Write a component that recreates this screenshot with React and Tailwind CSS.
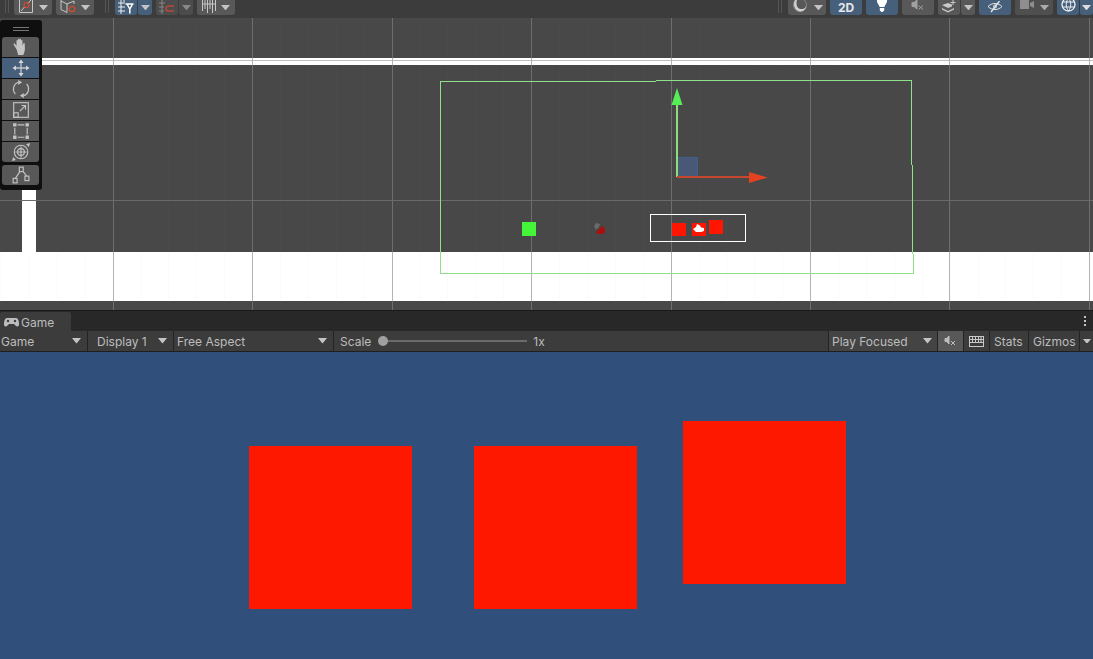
const FONT = { fontFamily: "Inter, 'Liberation Sans', sans-serif" };

function Caret({ color = "#c4c4c4", size = 9 }) {
  return (
    <svg width={size} height={size * 0.6} viewBox="0 0 10 6" className="shrink-0">
      <path d="M0 0h10L5 6z" fill={color} />
    </svg>
  );
}

// top toolbar button, cut off by the window edge
function TopBtn({ w, blue, children, className = "" }) {
  return (
    <div
      className={`h-[15px] flex items-center justify-center overflow-hidden rounded-b-[3px] ${blue ? "bg-[#46607c]" : "bg-[#585858]"} ${className}`}
      style={{ width: w }}
    >
      {children}
    </div>
  );
}

function TopBar() {
  return (
    <div className="h-[18px] bg-[#3c3c3c] relative flex items-start shrink-0 pl-[5px]">
      <div className="w-[4px] h-[13px] border-x border-[#555] mr-[5px]" />
      <TopBtn w={38} className="gap-[5px]">
        <svg width="16" height="15" viewBox="0 0 16 15" fill="none" stroke="#c8c8c8">
          <path d="M1.500 0v12.500h13V0" />
          <path d="M3 11l3.500-4M10 3.500L13 0" />
          <circle cx="8.500" cy="5" r="2.500" stroke="#d9482f" strokeWidth="1.200" />
        </svg>
        <Caret />
      </TopBtn>
      <TopBtn w={38} className="ml-[4px] gap-[5px]">
        <svg width="16" height="15" viewBox="0 0 16 15" fill="none" stroke="#c8c8c8">
          <path d="M1 0v9.500l6 3V4L1 1M7 4l7-3v3" />
          <circle cx="12" cy="9" r="2.700" stroke="#d9482f" strokeWidth="1.200" />
        </svg>
        <Caret />
      </TopBtn>
      <div className="w-[4px] h-[13px] border-x border-[#555] ml-[11px] mr-[6px]" />
      <TopBtn w={22} blue className="rounded-r-none">
        <svg width="16" height="15" viewBox="0 0 16 15" fill="none">
          <path d="M0 3h7M0 7h7M0 11h7M3 0v14M6 0v2" stroke="#eee" />
          <path d="M7.500 4h8M9 4l2.800 5 2.800-5M11.800 9v4.500" stroke="#fff" strokeWidth="1.500" />
        </svg>
      </TopBtn>
      <TopBtn w={14} blue className="ml-[1px] rounded-l-none"><Caret /></TopBtn>
      <TopBtn w={22} className="ml-[4px] rounded-r-none !bg-[#4c4c4c]">
        <svg width="16" height="15" viewBox="0 0 16 15" fill="none">
          <path d="M0 3h6M0 7h5M0 11h5M3 0v14" stroke="#858585" />
          <path d="M15 6H9.500a2.500 2.500 0 000 5H15" stroke="#b8493a" strokeWidth="1.700" />
        </svg>
      </TopBtn>
      <TopBtn w={14} className="ml-[1px] rounded-l-none !bg-[#4c4c4c]"><Caret color="#888" /></TopBtn>
      <TopBtn w={38} className="ml-[4px] gap-[5px]">
        <svg width="14" height="15" viewBox="0 0 14 15" fill="none" stroke="#c8c8c8">
          <path d="M.5 0v11M13.500 0v11M.5 4h13M3 0v9M5.500 0v13M8 0v9M10.500 0v13" />
        </svg>
        <Caret />
      </TopBtn>

      <div className="flex-1" />
      <div className="w-[4px] h-[13px] border-x border-[#555] mr-[6px]" />
      <TopBtn w={38} className="gap-[6px]">
        <svg width="16" height="15" viewBox="0 0 16 15" fill="none">
          <circle cx="8" cy="5" r="6.500" stroke="#8a8a8a" />
          <path d="M3 0C.5 4 2.500 11 8 11.500c3 0 5.500-2 6.500-5-2 2.500-5 3.200-7.500 2C4.500 7 4 3 5 0z" fill="#cfcfcf" />
        </svg>
        <Caret />
      </TopBtn>
      <TopBtn w={32} blue className="ml-[4px]">
        <span className="text-[12px] font-bold text-[#e8e8e8] leading-none">2D</span>
      </TopBtn>
      <TopBtn w={32} blue className="ml-[4px]">
        <svg width="12" height="15" viewBox="0 0 12 15">
          <path d="M1 0h10c.5 3-2 4.500-2.500 7h-5C3 4.500.5 3 1 0zM3.800 8h4.400v2.500L6.500 12h-1L3.800 10.500z" fill="#fff" />
        </svg>
      </TopBtn>
      <TopBtn w={32} className="ml-[4px]">
        <svg width="14" height="15" viewBox="0 0 14 15" fill="none" stroke="#a0a0a0">
          <path d="M1 2.500h2L6 0v9L3 6.500H1z" fill="#a0a0a0" />
          <path d="M7.500 5.500l4.500 4M12 5.500l-4.500 4" />
        </svg>
      </TopBtn>
      <TopBtn w={22} className="ml-[4px] rounded-r-none">
        <svg width="16" height="15" viewBox="0 0 16 15">
          <path d="M1 5l6-2 4 1.500v2L7 8zM1 8l6 3 6-3v1.500L7 12.500l-6-3z" fill="#c8c8c8" />
          <path d="M12 0v5M9.500 2.500h5" stroke="#c8c8c8" />
        </svg>
      </TopBtn>
      <TopBtn w={14} className="ml-[1px] rounded-l-none"><Caret /></TopBtn>
      <TopBtn w={32} blue className="ml-[4px]">
        <svg width="16" height="13" viewBox="0 0 16 13" fill="none" stroke="#e8e8e8">
          <path d="M1 5.500c4-4 10-4 14 0-4 4-10 4-14 0z" />
          <circle cx="8" cy="5.500" r="1.500" />
          <path d="M12.500 0L4 11" strokeWidth="1.300" />
        </svg>
      </TopBtn>
      <TopBtn w={38} className="ml-[4px] gap-[6px] !bg-[#4f4f4f]">
        <svg width="14" height="15" viewBox="0 0 14 15">
          <path d="M0 0h9v9H0zM10 3l4-2v7l-4-2z" fill="#8e8e8e" />
        </svg>
        <Caret color="#aaa" />
      </TopBtn>
      <TopBtn w={22} blue className="ml-[4px] rounded-r-none">
        <svg width="15" height="15" viewBox="0 0 15 15" fill="none" stroke="#f0f0f0">
          <circle cx="7.500" cy="4.500" r="6.500" strokeWidth="1.300" />
          <path d="M1.500 2h12M1.500 7h12M7.500-2c-3 4-3 9 0 13M7.500-2c3 4 3 9 0 13" />
        </svg>
      </TopBtn>
      <TopBtn w={13} blue className="ml-[1px] rounded-none"><Caret color="#ddd" /></TopBtn>
    </div>
  );
}

// the scene view drawing: world grid, bounds, gizmo and sprites
function SceneDrawing() {
  const major = [113, 252, 392, 531, 671, 810, 949, 1089];
  const minor = [];
  for (let x = 1; x < 1093; x += 27.9) minor.push(x);
  return (
    <svg width="1093" height="292" viewBox="0 18 1093 292" className="absolute inset-0" shapeRendering="crispEdges">
      <rect x="0" y="58" width="1093" height="7" fill="#ffffff" />
      <rect x="0" y="60" width="1093" height="1" fill="#c0c0c0" />
      <rect x="0" y="252" width="1093" height="49" fill="#ffffff" />
      <rect x="22" y="190" width="14" height="62" fill="#ffffff" />
      {minor.map((x) => (
        <g key={x}>
          <rect x={x} y="18" width="1" height="292" fill="#ffffff" opacity="0.015" />
          <rect x={x} y="252" width="1" height="49" fill="#000000" opacity="0.015" />
        </g>
      ))}
      {major.map((x) => (
        <g key={x}>
          <rect x={x} y="18" width="1" height="292" fill="#6e6e6e" />
          <rect x={x} y="58" width="1" height="7" fill="#b4b4b4" />
          <rect x={x} y="252" width="1" height="49" fill="#b4b4b4" />
        </g>
      ))}
      <rect x="0" y="200" width="1093" height="1" fill="#6a6a6a" />

      {/* camera bounds, slightly stepped */}
      <g fill="#8ee08a">
        <rect x="440" y="81" width="216" height="1" />
        <rect x="656" y="80" width="256" height="1" />
        <rect x="911" y="80" width="1" height="85" />
        <rect x="912" y="165" width="1" height="89" />
        <rect x="913" y="254" width="1" height="20" />
        <rect x="440" y="81" width="1" height="193" />
        <rect x="440" y="273" width="157" height="1" />
        <rect x="597" y="273" width="317" height="1" />
      </g>

      {/* move gizmo */}
      <rect x="677" y="157" width="20" height="20" fill="#4a5878" stroke="#3f5f90" />
      <rect x="676" y="104" width="2" height="73" fill="#8fdc7e" />
      <rect x="677" y="176" width="72" height="2" fill="#c8452f" />
      <g shapeRendering="auto">
        <path d="M677 88l5.500 17h-11z" fill="#55ee55" />
        <path d="M749 172l18.500 5.500-18.500 5.500z" fill="#e5431f" />
      </g>

      <rect x="522" y="222" width="14" height="14" fill="#44f53a" />
      <rect x="650.500" y="214.500" width="95" height="27" fill="none" stroke="#ffffff" />
      <rect x="672" y="223" width="14" height="13" fill="#ff1500" />
      <rect x="692" y="223" width="14" height="13" fill="#ff1500" />
      <rect x="709" y="220" width="14" height="14" fill="#ff1500" />
      <g shapeRendering="auto">
        <path d="M693 229l3-2 1-3 3 1.500 1 2 3 .5v3l-3 1h-5z" fill="#ffffff" />
        <path d="M594 226l2-3 4 1-1 3-3 3z" fill="#6a6a6a" />
        <path d="M596 232l6-6 3 2v4l-2 2h-6z" fill="#a81010" />
      </g>
    </svg>
  );
}

function ToolBtn({ active, children, className = "" }) {
  return (
    <div className={`w-[37px] h-[20px] flex items-center justify-center ${active ? "bg-[#46607c]" : "bg-[#585858]"} ${className}`}>
      <svg width="18" height="18" viewBox="0 0 16 16" fill="none" stroke="#c4c4c4" strokeWidth="1">
        {children}
      </svg>
    </div>
  );
}

function ToolPanel() {
  return (
    <div className="absolute left-0 top-[2px] w-[42px] h-[170px] bg-[#0f0f0f] rounded-[3px] flex flex-col items-start pl-[2px]">
      <div className="h-[17px] w-[16px] ml-[11px] flex flex-col justify-center gap-[2px]">
        <div className="h-px bg-[#777]" />
        <div className="h-px bg-[#777]" />
      </div>
      <div className="flex flex-col gap-px w-[37px]">
        <ToolBtn className="rounded-t-[3px]">
          <path d="M4 10L1.500 6c-.5-1 .8-1.500 1.300-.7L4 7V2.500c0-1 1.300-1 1.300 0V6.500V1.500c0-1 1.400-1 1.400 0V6.500V1.500c0-1 1.300-1 1.300 0V6.500V2.500c0-1 1.300-1 1.300 0V7l.7-2c.3-1 1.500-.8 1.300.2L11.500 10c-.5 3-1 4-1.500 5H5.500C5 14 4.500 11 4 10z" fill="#c4c4c4" stroke="none" />
        </ToolBtn>
        <ToolBtn active>
          <path d="M8 3v10M3 8h10" strokeWidth="1.200" />
          <path d="M8 .5l2.300 3H5.700zM8 15.500l2.300-3H5.700zM.5 8l3-2.300v4.600zM15.500 8l-3-2.300v4.600z" fill="#d8d8d8" stroke="none" />
        </ToolBtn>
        <ToolBtn>
          <path d="M3 12.500A6.500 6.500 0 015.500 2M13 3.500A6.500 6.500 0 0110.500 14" />
          <path d="M5.500 0v4.500L9 2zM10.500 16v-4.500L7 14z" fill="#c4c4c4" stroke="none" />
        </ToolBtn>
        <ToolBtn>
          <rect x="1.500" y="1.500" width="13" height="13" />
          <rect x="1.500" y="10.500" width="4" height="4" />
          <path d="M7 9l5-5M8.500 4H12v3.500" />
        </ToolBtn>
        <ToolBtn>
          <path d="M5 2.500h6M5 13.500h6M2.500 5v6M13.500 5v6" />
          <path d="M1 1h3v3H1zM12 1h3v3h-3zM1 12h3v3H1zM12 12h3v3h-3z" fill="#c4c4c4" stroke="none" />
        </ToolBtn>
        <ToolBtn className="rounded-b-[3px]">
          <circle cx="8" cy="8" r="6" />
          <path d="M8 3v10M3 8h10" />
          <circle cx="8" cy="8" r="3" />
          <path d="M0 16l3.500-1-2.500-2.500zM16 0l-3.500 1 2.500 2.500z" fill="#c4c4c4" stroke="none" />
        </ToolBtn>
      </div>
      <div className="mt-[3px]">
        <ToolBtn className="rounded-[3px]">
          <rect x="1" y="11" width="3.500" height="4" />
          <rect x="11.500" y="9" width="3.500" height="4" />
          <rect x="6.500" y="1" width="3.500" height="4" />
          <path d="M3 11l4-6M10 5l3 4" />
        </ToolBtn>
      </div>
    </div>
  );
}

function Dropdown({ label, w, className = "" }) {
  return (
    <div className={`h-full flex items-center justify-between border-r border-[#232323] pr-[6px] bg-[#3c3c3c] ${className}`} style={{ width: w }}>
      <span className="whitespace-nowrap pt-[1px] leading-[15px]">{label}</span>
      <Caret size={9} />
    </div>
  );
}

function GameToolbar() {
  return (
    <div className="h-[20px] bg-[#3c3c3c] flex items-center text-[12px] text-[#bdbdbd] shrink-0 border-b border-[#1f1f1f] box-content">
      <Dropdown label="Game" w={88} className="pl-[1px]" />
      <Dropdown label="Display 1" w={86} className="pl-[9px]" />
      <Dropdown label="Free Aspect" w={160} className="pl-[3px]" />
      <div className="w-[494px] h-full flex items-center pl-[6px]">
        <span className="pt-[1px]">Scale</span>
        <div className="relative ml-[8px] w-[148px] h-[2px] bg-[#6b6b6b]">
          <div className="absolute -left-[1px] -top-[4px] w-[10px] h-[10px] rounded-full bg-[#a0a0a0]" />
        </div>
        <span className="ml-[6px] pt-[1px]">1x</span>
      </div>
      <div className="w-[110px] h-full flex items-center justify-between pl-[3px] pr-[5px] border-x border-[#232323] bg-[#444]">
        <span className="pt-[1px]">Play Focused</span>
        <Caret size={9} />
      </div>
      <div className="w-[26px] h-full bg-[#585858] flex items-center justify-center border-r border-[#232323]">
        <svg width="14" height="12" viewBox="0 0 14 12" fill="none" stroke="#bdbdbd">
          <path d="M1 3.500h1.500L5 1v8L2.500 6.500H1z" fill="#bdbdbd" />
          <path d="M7 6l4 4M11 6l-4 4" />
        </svg>
      </div>
      <div className="w-[26px] h-full flex items-center justify-center border-r border-[#232323]">
        <svg width="15" height="11" viewBox="0 0 15 11" fill="none" stroke="#c8c8c8">
          <rect x=".5" y=".5" width="14" height="10" />
          <path d="M.5 3.500h14M.5 6.500h14M3.500.5v6M6.500.5v6M9.500.5v6M12 .5v6" />
        </svg>
      </div>
      <div className="w-[39px] h-full flex items-center pl-[4px] pt-[1px] border-r border-[#232323]">Stats</div>
      <div className="w-[51px] h-full flex items-center pl-[4px] pt-[1px] border-r border-[#232323]">Gizmos</div>
      <div className="flex-1 h-full flex items-center justify-center">
        <Caret size={8} />
      </div>
    </div>
  );
}

export default function App() {
  return (
    <div className="w-[1093px] h-[659px] overflow-hidden flex flex-col bg-[#304f7a]" style={FONT}>
      <TopBar />
      <div className="relative h-[292px] bg-[#484848] shrink-0">
        <SceneDrawing />
        <ToolPanel />
      </div>
      <div className="h-[1px] bg-[#1a1a1a] shrink-0" />
      <div className="h-[20px] bg-[#282828] flex items-end justify-between shrink-0">
        <div className="w-[71px] h-[19px] bg-[#3c3c3c] flex items-center gap-[2px] pl-[4px] pt-[2px] text-[12px] text-[#bdbdbd] rounded-t-[2px]">
          <svg width="15" height="9" viewBox="0 0 15 9">
            <path d="M3 0h9c2 0 3 3 3 6 0 3-2 3-3.500 1.500L10 6H5L3.500 7.500C2 9 0 9 0 6c0-3 1-6 3-6z" fill="#bdbdbd" />
            <circle cx="4" cy="3" r="1.200" fill="#3c3c3c" />
            <circle cx="11" cy="3" r="1.200" fill="#3c3c3c" />
          </svg>
          Game
        </div>
        <div className="h-full w-[16px] flex flex-col items-center justify-center gap-[2px]">
          <div className="w-[2px] h-[2px] bg-[#c4c4c4]" />
          <div className="w-[2px] h-[2px] bg-[#c4c4c4]" />
          <div className="w-[2px] h-[2px] bg-[#c4c4c4]" />
        </div>
      </div>
      <GameToolbar />
      <div className="relative flex-1 bg-[#304f7a]">
        <div className="absolute left-[249px] top-[94px] w-[163px] h-[163px] bg-[#ff1800]" />
        <div className="absolute left-[474px] top-[94px] w-[163px] h-[163px] bg-[#ff1800]" />
        <div className="absolute left-[683px] top-[69px] w-[163px] h-[163px] bg-[#ff1800]" />
      </div>
    </div>
  );
}
